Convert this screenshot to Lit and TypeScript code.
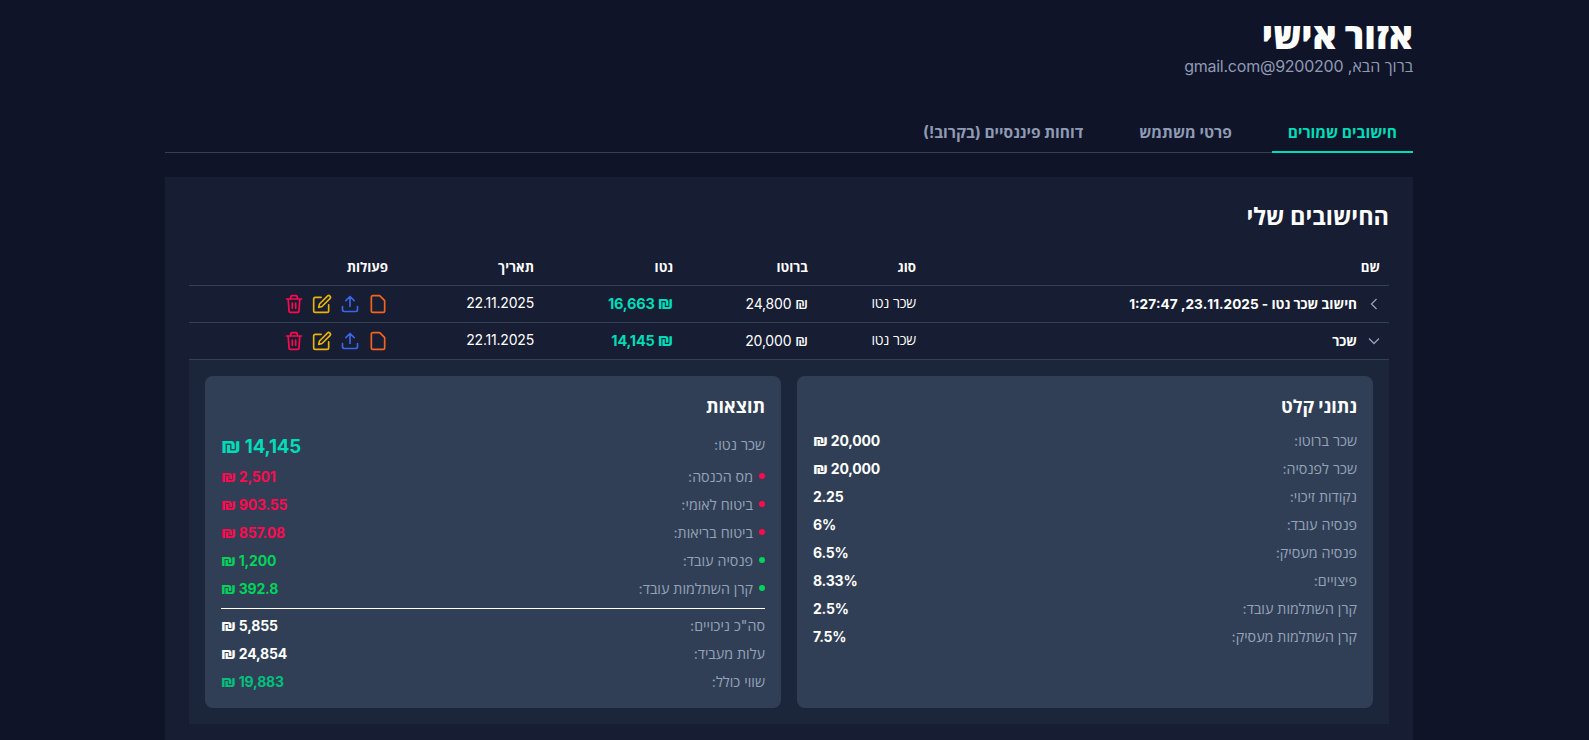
import { LitElement, html, css, svg } from "lit";
import { customElement } from "lit/decorators.js";

const trash = svg`<path d="M3 6h18M8 6V4a2 2 0 0 1 2-2h4a2 2 0 0 1 2 2v2M19 6l-1 14a2 2 0 0 1-2 2H8a2 2 0 0 1-2-2L5 6M10 11v6M14 11v6"/>`;
const edit = svg`<path d="M11 4H4a2 2 0 0 0-2 2v14a2 2 0 0 0 2 2h14a2 2 0 0 0 2-2v-7"/><path d="M18.5 2.5a2.12 2.12 0 0 1 3 3L12 15l-4 1 1-4 9.5-9.5z"/>`;
const upload = svg`<path d="M21 15v4a2 2 0 0 1-2 2H5a2 2 0 0 1-2-2v-4M17 8l-5-5-5 5M12 3v12"/>`;
const file = svg`<path d="M14 2H6a2 2 0 0 0-2 2v16a2 2 0 0 0 2 2h12a2 2 0 0 0 2-2V8z"/>`;

const inputs = [
  ["שכר ברוטו:", "₪ 20,000"],
  ["שכר לפנסיה:", "₪ 20,000"],
  ["נקודות זיכוי:", "2.25"],
  ["פנסיה עובד:", "6%"],
  ["פנסיה מעסיק:", "6.5%"],
  ["פיצויים:", "8.33%"],
  ["קרן השתלמות עובד:", "2.5%"],
  ["קרן השתלמות מעסיק:", "7.5%"],
];

const deductions = [
  ["מס הכנסה:", "₪ 2,501", "red"],
  ["ביטוח לאומי:", "₪ 903.55", "red"],
  ["ביטוח בריאות:", "₪ 857.08", "red"],
  ["פנסיה עובד:", "₪ 1,200", "green"],
  ["קרן השתלמות עובד:", "₪ 392.8", "green"],
];

const totals = [
  ["סה\"כ ניכויים:", "₪ 5,855", ""],
  ["עלות מעביד:", "₪ 24,854", ""],
  ["שווי כולל:", "₪ 19,883", "emerald"],
];

// the shekel sign is drawn bigger than the digits
const money = (v: string) =>
  v.startsWith("₪") ? html`<span class="ils">₪</span>${v.slice(1)}` : v;

@customElement("app-root")
export class AppRoot extends LitElement {
  static styles = css`
    :host {
      display: block;
      height: 740px;
      overflow: hidden;
      background: #101429;
      color: #fff;
      font-family: "Inter", "Open Sans", "Noto Sans", sans-serif;
    }
    .page {
      direction: rtl;
      width: 1248px;
      margin: 0 0 0 165px;
      padding-top: 16px;
    }
    h1 {
      margin: 0;
      font-size: 36px;
      line-height: 40px;
      font-weight: 800;
    }
    .welcome {
      margin: 1px 0 0;
      font-size: 16px;
      line-height: 18px;
      color: #8f9bb3;
    }
    .mail { letter-spacing: -0.24px; }
    .tabs {
      display: flex;
      gap: 24px;
      margin-top: 35px;
      border-bottom: 1px solid #334155;
    }
    .tab {
      padding: 12px 16px 7px;
      font-size: 15.5px;
      line-height: 22px;
      font-weight: 700;
      color: #8f9bb3;
      margin-bottom: -1px;
      border-bottom: 2px solid transparent;
    }
    .tab.on {
      color: #00dcb8;
      border-color: #00dcb8;
    }
    .panel {
      margin-top: 24px;
      padding: 24px;
      background: #171d33;
    }
    h2 {
      margin: 0 0 16px;
      font-size: 23.5px;
      line-height: 32px;
      font-weight: 700;
    }
    .head, .row {
      display: grid;
      grid-template-columns: 464px 108px 135px 139px 146px 1fr;
      align-items: center;
      padding: 0 9px 0 0;
      border-bottom: 1px solid #334155;
      font-size: 14px;
    }
    .head {
      height: 36px;
      font-size: 13.3px;
      font-weight: 700;
    }
    .row { height: 36px; }
    .cell { margin-bottom: 3px; letter-spacing: -0.2px; }
    .name {
      display: flex;
      align-items: center;
      gap: 7px;
      margin-right: -4px;
      font-weight: 700;
      font-size: 13.6px;
    }
    .name span { margin-bottom: 2px; }
    .chev { width: 20px; height: 20px; fill: none; stroke: #94a3b8; stroke-width: 1.5; flex: none; }
    .net { color: #00dcb8; font-weight: 700; font-size: 14.5px; }
    .actions { display: flex; gap: 8px; }
    .ic {
      width: 20px;
      height: 20px;
      fill: none;
      stroke-width: 2;
      stroke-linecap: round;
      stroke-linejoin: round;
    }
    .expand {
      display: grid;
      grid-template-columns: 1fr 1fr;
      gap: 16px;
      padding: 16px;
      background: #1c263b;
    }
    .card {
      box-sizing: border-box;
      padding: 16px;
      background: #313f56;
      border-radius: 8px;
      height: 332px;
    }
    h3 {
      margin: 3px 0 8px;
      font-size: 18px;
      line-height: 24px;
      font-weight: 700;
    }
    .inputs h3 { margin-bottom: 7px; }
    .line {
      display: flex;
      justify-content: space-between;
      align-items: center;
      height: 28px;
      font-size: 14.25px;
      color: #94a3b8;
    }
    .line b { color: #fff; font-size: 14px; direction: ltr; letter-spacing: -0.2px; }
    .ils { font-size: 1.15em; }
    .line b.big { color: #00dcb8; font-size: 18.7px; }
    .line b.red { color: #ff0a4e; }
    .line b.green { color: #00d45a; }
    .line b.emerald { color: #00c17c; }
    .lead { height: 35px; }
    .lbl { display: flex; align-items: center; gap: 6px; }
    .dot { width: 6px; height: 6px; border-radius: 50%; }
    .dot.red { background: #ff0a4e; }
    .dot.green { background: #00d45a; }
    hr { border: 0; border-top: 1px solid #fff; margin: 6px 0 2px; }
  `;

  private renderRow(name: unknown, gross: string, net: string, open: boolean) {
    return html`<div class="row">
      <div class="name">
        <svg class="chev" viewBox="0 0 24 24">
          <path d=${open ? "M6 9l6 6 6-6" : "M15 18l-6-6 6-6"}></path>
        </svg>
        <span>${name}</span>
      </div>
      <div class="cell">שכר נטו</div>
      <div class="cell">${money(gross)}</div>
      <div class="cell net">${money(net)}</div>
      <div class="cell">22.11.2025</div>
      <div class="actions">
        <svg class="ic" viewBox="0 0 24 24" stroke="#f5641e">${file}</svg>
        <svg class="ic" viewBox="0 0 24 24" stroke="#3b66e8">${upload}</svg>
        <svg class="ic" viewBox="0 0 24 24" stroke="#eab308">${edit}</svg>
        <svg class="ic" viewBox="0 0 24 24" stroke="#ff0a4e">${trash}</svg>
      </div>
    </div>`;
  }

  render() {
    return html`<div class="page">
      <h1>אזור אישי</h1>
      <p class="welcome">ברוך הבא, <span class="mail">9200200@gmail.com</span></p>
      <div class="tabs">
        <div class="tab on">חישובים שמורים</div>
        <div class="tab">פרטי משתמש</div>
        <div class="tab">דוחות פיננסיים (בקרוב!)</div>
      </div>
      <div class="panel">
        <h2>החישובים שלי</h2>
        <div class="head">
          <div>שם</div><div>סוג</div><div>ברוטו</div><div>נטו</div><div>תאריך</div><div>פעולות</div>
        </div>
        ${this.renderRow("חישוב שכר נטו - 23.11.2025, 1:27:47", "₪ 24,800", "₪ 16,663", false)}
        ${this.renderRow("שכר", "₪ 20,000", "₪ 14,145", true)}
        <div class="expand">
          <div class="card inputs">
            <h3>נתוני קלט</h3>
            ${inputs.map(([l, v]) => html`<div class="line"><span>${l}</span><b>${money(v)}</b></div>`)}
          </div>
          <div class="card">
            <h3>תוצאות</h3>
            <div class="line lead"><span>שכר נטו:</span><b class="big">${money("₪ 14,145")}</b></div>
            ${deductions.map(
              ([l, v, c]) => html`<div class="line">
                <span class="lbl"><i class="dot ${c}"></i>${l}</span><b class=${c}>${money(v)}</b>
              </div>`
            )}
            <hr />
            ${totals.map(([l, v, c]) => html`<div class="line"><span>${l}</span><b class=${c}>${money(v)}</b></div>`)}
          </div>
        </div>
      </div>
    </div>`;
  }
}
